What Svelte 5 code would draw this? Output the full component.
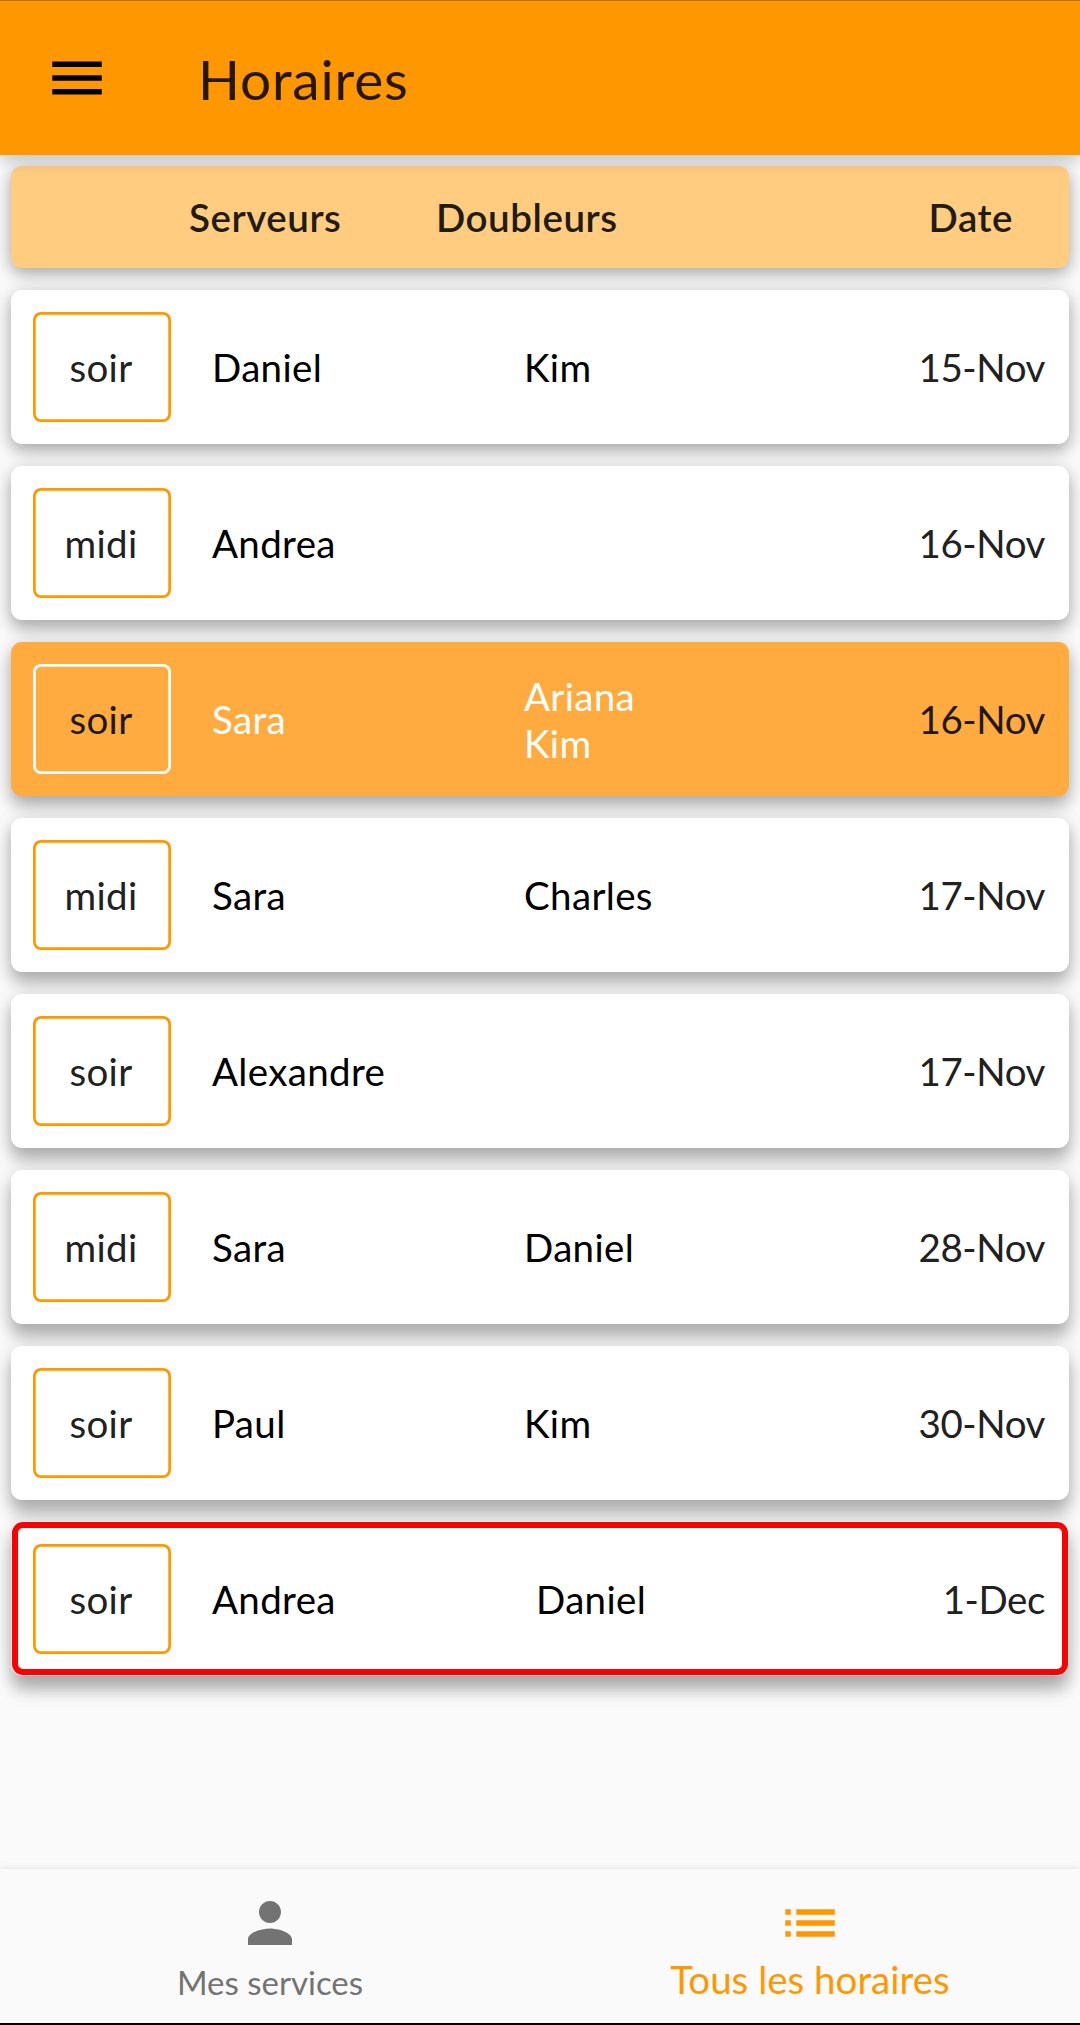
<script>
  const rows = [
    { time: 'soir', servers: ['Daniel'], backups: ['Kim'], date: '15-Nov' },
    { time: 'midi', servers: ['Andrea'], backups: [], date: '16-Nov' },
    { time: 'soir', servers: ['Sara'], backups: ['Ariana', 'Kim'], date: '16-Nov', mine: true },
    { time: 'midi', servers: ['Sara'], backups: ['Charles'], date: '17-Nov' },
    { time: 'soir', servers: ['Alexandre'], backups: [], date: '17-Nov' },
    { time: 'midi', servers: ['Sara'], backups: ['Daniel'], date: '28-Nov' },
    { time: 'soir', servers: ['Paul'], backups: ['Kim'], date: '30-Nov' },
    { time: 'soir', servers: ['Andrea'], backups: ['Daniel'], date: '1-Dec', selected: true },
  ];
</script>

<div class="screen">
  <header class="appbar">
    <svg class="icon" viewBox="0 0 24 24"><path d="M3 18h18v-2H3v2zm0-5h18v-2H3v2zm0-7v2h18V6H3z" /></svg>
    <h1>Horaires</h1>
  </header>

  <main>
    <div class="card head">
      <span class="h-server">Serveurs</span>
      <span class="h-backup">Doubleurs</span>
      <span class="h-date">Date</span>
    </div>
    {#each rows as row, i}
      <!-- shadows lengthen further down the page, away from the light -->
      <div class="card row" class:mine={row.mine} class:selected={row.selected} style="--drop: {7 + i * 1.1}px">
        <span class="badge">{row.time}</span>
        <div class="names servers">
          {#each row.servers as n}<span>{n}</span>{/each}
        </div>
        <div class="names backups">
          {#each row.backups as n}<span>{n}</span>{/each}
        </div>
        <span class="date">{row.date}</span>
      </div>
    {/each}
  </main>

  <nav>
    <div class="tab">
      <svg class="icon" viewBox="0 0 24 24"><path d="M12 12c2.21 0 4-1.79 4-4s-1.79-4-4-4-4 1.79-4 4 1.79 4 4 4zm0 2c-2.67 0-8 1.34-8 4v2h16v-2c0-2.66-5.33-4-8-4z" /></svg>
      <span>Mes services</span>
    </div>
    <div class="tab active">
      <svg class="icon" viewBox="0 0 24 24"><path d="M3 13h2v-2H3v2zm0 4h2v-2H3v2zm0-8h2V7H3v2zm4 4h14v-2H7v2zm0 4h14v-2H7v2zM7 7v2h14V7H7z" /></svg>
      <span>Tous les horaires</span>
    </div>
  </nav>
</div>

<style>
  :global(body) {
    margin: 0;
  }
  .screen {
    box-sizing: border-box;
    width: 1080px;
    height: 2025px;
    display: flex;
    flex-direction: column;
    background: #fafafa;
    border-bottom: 2px solid #000;
    font-family: Lato, sans-serif;
    font-size: 38.5px;
    line-height: 47px;
    color: #212121;
    overflow: hidden;
  }
  .icon {
    width: 66px;
    height: 66px;
    fill: currentColor;
    flex: none;
  }
  .appbar {
    box-sizing: border-box;
    height: 155px;
    flex: none;
    display: flex;
    align-items: center;
    padding-left: 44px;
    gap: 88px;
    background: #ff9800;
    border-top: 1px solid #b87214;
    box-shadow: 0 5px 14px rgba(0, 0, 0, 0.22);
    position: relative;
    z-index: 1;
    color: #000;
  }
  h1 {
    margin: 2px 0 0;
    font-size: 55px;
    line-height: 66px;
    font-weight: 400;
    letter-spacing: 0.8px;
    color: #261700;
  }
  main {
    flex: 1;
    display: flex;
    flex-direction: column;
    gap: 22px;
    padding: 11px 11px 0;
  }
  .card {
    box-sizing: border-box;
    flex: none;
    display: flex;
    align-items: center;
    border-radius: 11px;
    background: #fff;
    box-shadow:
      0 var(--drop, 6px) 16px rgba(0, 0, 0, 0.26),
      0 2px 20px rgba(0, 0, 0, 0.12);
  }
  .head {
    height: 102px;
    padding: 1px 56px 0 178px;
    background: #ffcc80;
    color: #211b11;
    font-weight: 600;
    letter-spacing: 0.55px;
  }
  .h-server {
    width: 247px;
  }
  .h-backup {
    flex: 1;
  }
  .row {
    height: 154px;
    padding: 0 24px 0 22px;
  }
  .badge {
    box-sizing: border-box;
    width: 138px;
    height: 110px;
    padding-right: 2px;
    display: flex;
    align-items: center;
    justify-content: center;
    border-radius: 8px;
    box-shadow: inset 0 0 0 2.75px #ff9800;
    letter-spacing: 0.3px;
  }
  .names {
    display: flex;
    flex-direction: column;
    color: #000;
    letter-spacing: 0.35px;
  }
  .servers {
    width: 312px;
    margin-left: 41px;
  }
  .backups {
    flex: 1;
  }
  .date {
    letter-spacing: -0.4px;
  }
  .mine {
    background: #ffab40;
    color: #21180c;
  }
  .mine .names {
    color: #fff;
  }
  .mine .backups {
    padding-top: 1px;
  }
  .mine .badge {
    box-shadow: inset 0 0 0 2.75px #fff;
  }
  .selected {
    height: 153px;
    margin: 0 1px 1px;
    border: 6px solid #f00;
    padding: 1px 17px 0 15px;
    box-shadow:
      0 0 0 1px #f0f0f0,
      0 var(--drop) 16px rgba(0, 0, 0, 0.28),
      0 2px 20px rgba(0, 0, 0, 0.12);
  }
  .selected .servers {
    width: 324px;
  }
  nav {
    box-sizing: border-box;
    height: 154px;
    flex: none;
    display: flex;
    background: #fafafa;
    box-shadow: 0 0 7px rgba(0, 0, 0, 0.12);
  }
  .tab {
    flex: 1;
    display: flex;
    flex-direction: column;
    align-items: center;
    padding-top: 21px;
    color: #737373;
    font-size: 33px;
  }
  .tab span {
    margin-top: 3px;
  }
  .active {
    color: #ff9800;
    font-size: 38.5px;
  }
  .active span {
    margin-top: 0;
  }
</style>
